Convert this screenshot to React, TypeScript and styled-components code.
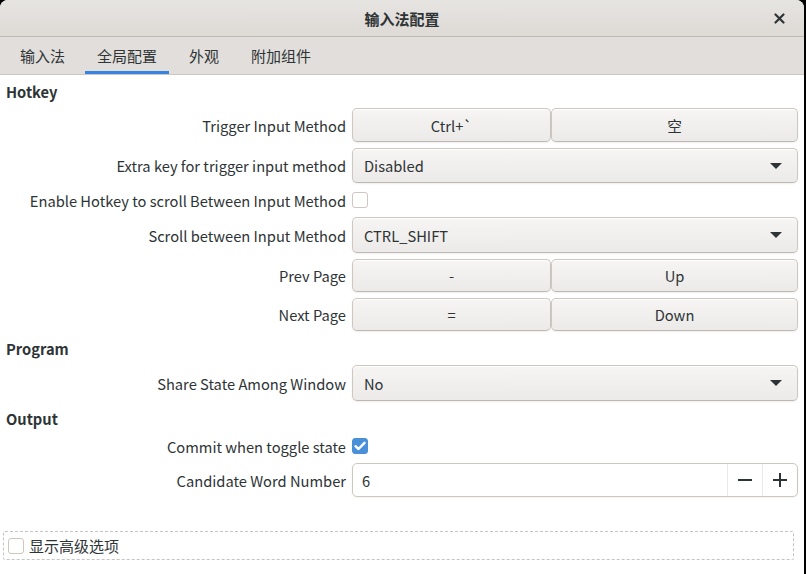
import React from "react";
import styled, { createGlobalStyle } from "styled-components";

const Global = createGlobalStyle`
  html, body { margin: 0; padding: 0; background: #000; }
  body { font-family: "Noto Sans CJK SC", "Noto Sans", sans-serif; color: #2e3436; }
  * { box-sizing: border-box; }
`;

const Window = styled.div`
  width: 804px;
  height: 574px;
  background: #fff;
  border-radius: 8px 8px 0 0;
  overflow: hidden;
  display: flex;
  flex-direction: column;
`;

const TitleBar = styled.div`
  height: 37px;
  flex: none;
  display: flex;
  align-items: center;
  justify-content: center;
  position: relative;
  background: linear-gradient(to bottom, #e6e4e1, #dedad6);
  border-bottom: 1px solid #bfb8b1;
  font-size: 15px;
  font-weight: bold;
  color: #2e3436;
`;

const CloseButton = styled.div`
  position: absolute;
  right: 18px;
  top: 11px;
  width: 14px;
  height: 14px;
  display: flex;
  align-items: center;
  justify-content: center;
`;

const TabBar = styled.div`
  height: 38px;
  flex: none;
  display: flex;
  gap: 8px;
  padding-left: 8px;
  background: #e1dedb;
  border-bottom: 1px solid #cdc7c2;
`;

const Tab = styled.div<{ $active?: boolean }>`
  padding: 0 12px;
  display: flex;
  align-items: center;
  font-size: 15px;
  color: #2e3436;
  border-bottom: 3px solid ${(p) => (p.$active ? "#3584e4" : "transparent")};
  padding-top: 3px;
`;

const Content = styled.div`
  flex: 1;
  display: flex;
  flex-direction: column;
  padding: 0 6px 0 0;
`;

const SectionTitle = styled.div<{ $h: number }>`
  height: ${(p) => p.$h}px;
  display: flex;
  align-items: center;
  padding-left: 6px;
  font-size: 14.7px;
  font-weight: bold;
  color: #2e3436;
`;

const Rows = styled.div`
  display: grid;
  grid-template-columns: 346px 1fr;
  column-gap: 6px;
  row-gap: 6px;
`;

const Label = styled.div`
  font-size: 14.7px;
  color: #2e3436;
  text-align: right;
  display: flex;
  align-items: center;
  justify-content: flex-end;
  white-space: nowrap;
`;

const Control = styled.div<{ $h: number }>`
  height: ${(p) => p.$h}px;
  display: flex;
  align-items: center;
`;

const ButtonPair = styled.div`
  display: grid;
  grid-template-columns: 199px 1fr;
  width: 100%;
  height: 100%;
`;

const buttonLook = `
  background-image: linear-gradient(to top, #edebe9 2px, #f6f5f4);
  border: 1px solid #cdc7c2;
  border-bottom-color: #bfb8b1;
  border-radius: 5px;
  box-shadow: inset 0 1px #fff, 0 1px 2px rgba(0,0,0,0.07);
  color: #2e3436;
  font-size: 14.7px;
  font-family: "Noto Sans CJK SC", "Noto Sans", sans-serif;
`;

const KeyButton = styled.div`
  ${buttonLook}
  display: flex;
  align-items: center;
  justify-content: center;
  height: 100%;
`;

const Combo = styled.div`
  ${buttonLook}
  width: 100%;
  height: 100%;
  display: flex;
  align-items: center;
  justify-content: space-between;
  padding: 0 15px 0 11px;
`;

const Arrow = styled.div`
  width: 0;
  height: 0;
  border-left: 6px solid transparent;
  border-right: 6px solid transparent;
  border-top: 6px solid #2e3436;
`;

const CheckBox = styled.div<{ $checked?: boolean }>`
  width: 16px;
  height: 16px;
  border-radius: 3px;
  flex: none;
  border: 1px solid ${(p) => (p.$checked ? "#4a90d9" : "#cdc7c2")};
  background: ${(p) => (p.$checked ? "#4a90d9" : "#fff")};
  display: flex;
  align-items: center;
  justify-content: center;
`;

const Spin = styled.div`
  width: 100%;
  height: 100%;
  display: flex;
  border: 1px solid #cdc7c2;
  border-radius: 5px;
  background: #fff;
  box-shadow: 0 1px 2px rgba(0,0,0,0.05);
`;

const SpinValue = styled.div`
  flex: 1;
  display: flex;
  align-items: center;
  padding-left: 9px;
  font-size: 14.7px;
  color: #2e3436;
`;

const SpinButton = styled.div`
  width: 35px;
  border-left: 1px solid #eae8e6;
  display: flex;
  align-items: center;
  justify-content: center;
`;

const Spacer = styled.div`
  flex: 1;
`;

const Advanced = styled.div`
  margin: 0 4px 14px 3px;
  height: 29px;
  border: 1px dashed #c4c4c4;
  border-radius: 2px;
  display: flex;
  align-items: center;
  gap: 5px;
  padding-left: 4px;
  font-size: 15px;
  color: #2e3436;
`;

const Check = () => (
  <svg width="12" height="10" viewBox="0 0 12 10">
    <path d="M1.5 5.2 L4.5 8 L10.5 1.8" stroke="#fff" strokeWidth="2.4" fill="none" strokeLinecap="round" strokeLinejoin="round" />
  </svg>
);

export default function App() {
  return (
    <>
      <Global />
      <Window>
        <TitleBar>
          输入法配置
          <CloseButton>
            <svg width="11" height="11" viewBox="0 0 11 11">
              <path d="M1.5 1.5 L9.5 9.5 M9.5 1.5 L1.5 9.5" stroke="#2e3436" strokeWidth="2.2" strokeLinecap="round" />
            </svg>
          </CloseButton>
        </TitleBar>
        <TabBar>
          <Tab>输入法</Tab>
          <Tab $active>全局配置</Tab>
          <Tab>外观</Tab>
          <Tab>附加组件</Tab>
        </TabBar>
        <Content>
          <SectionTitle $h={33}>Hotkey</SectionTitle>
          <Rows>
            <Label>Trigger Input Method</Label>
            <Control $h={34}>
              <ButtonPair>
                <KeyButton>Ctrl+`</KeyButton>
                <KeyButton>空</KeyButton>
              </ButtonPair>
            </Control>
            <Label>Extra key for trigger input method</Label>
            <Control $h={35}>
              <Combo>
                Disabled
                <Arrow />
              </Combo>
            </Control>
            <Label>Enable Hotkey to scroll Between Input Method</Label>
            <Control $h={22}>
              <CheckBox />
            </Control>
            <Label>Scroll between Input Method</Label>
            <Control $h={36}>
              <Combo>
                CTRL_SHIFT
                <Arrow />
              </Combo>
            </Control>
            <Label>Prev Page</Label>
            <Control $h={33}>
              <ButtonPair>
                <KeyButton>-</KeyButton>
                <KeyButton>Up</KeyButton>
              </ButtonPair>
            </Control>
            <Label>Next Page</Label>
            <Control $h={33}>
              <ButtonPair>
                <KeyButton>=</KeyButton>
                <KeyButton>Down</KeyButton>
              </ButtonPair>
            </Control>
          </Rows>
          <SectionTitle $h={34}>Program</SectionTitle>
          <Rows>
            <Label>Share State Among Window</Label>
            <Control $h={36}>
              <Combo>
                No
                <Arrow />
              </Combo>
            </Control>
          </Rows>
          <SectionTitle $h={34}>Output</SectionTitle>
          <Rows>
            <Label>Commit when toggle state</Label>
            <Control $h={22}>
              <CheckBox $checked>
                <Check />
              </CheckBox>
            </Control>
            <Label>Candidate Word Number</Label>
            <Control $h={34}>
              <Spin>
                <SpinValue>6</SpinValue>
                <SpinButton>
                  <svg width="16" height="16" viewBox="0 0 16 16">
                    <path d="M1 8 H15" stroke="#2e3436" strokeWidth="2" />
                  </svg>
                </SpinButton>
                <SpinButton>
                  <svg width="16" height="16" viewBox="0 0 16 16">
                    <path d="M1 8 H15 M8 1 V15" stroke="#2e3436" strokeWidth="2" />
                  </svg>
                </SpinButton>
              </Spin>
            </Control>
          </Rows>
          <Spacer />
          <Advanced>
            <CheckBox />
            显示高级选项
          </Advanced>
        </Content>
      </Window>
    </>
  );
}
